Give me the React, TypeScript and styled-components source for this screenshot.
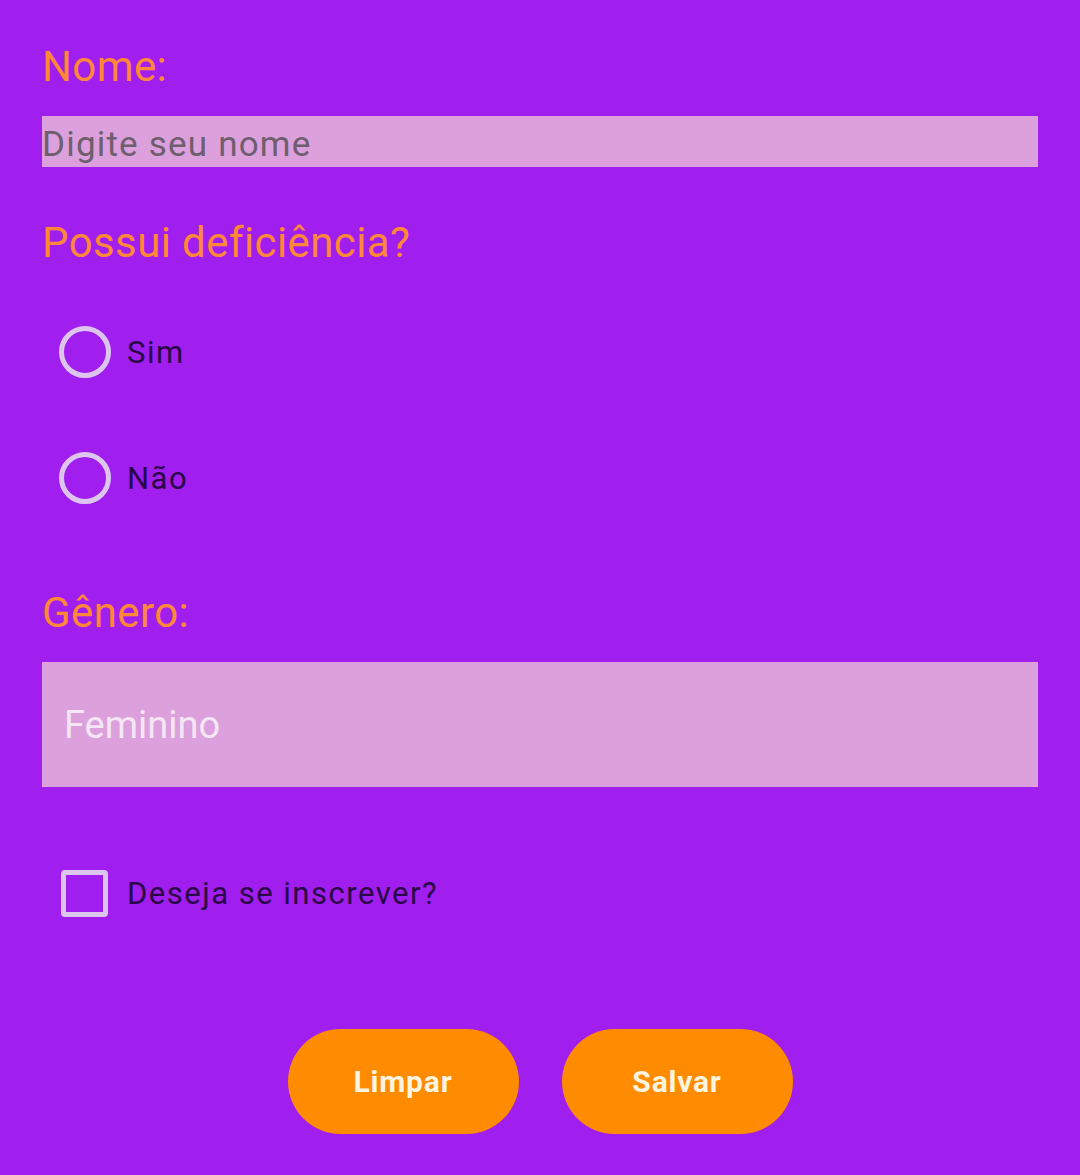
import React from "react";
import styled, { createGlobalStyle } from "styled-components";

const GlobalStyle = createGlobalStyle`
  html, body {
    margin: 0;
    padding: 0;
    background: #a01eee;
  }
  body {
    font-family: Roboto, "Noto Sans", sans-serif;
  }
`;

const Page = styled.div`
  width: 1080px;
  min-height: 1175px;
  box-sizing: border-box;
  padding: 42px 42px 0 42px;
  background: #a01eee;
  display: flex;
  flex-direction: column;
`;

const Label = styled.div<{ $top?: number }>`
  margin-top: ${(p) => p.$top ?? 0}px;
  font-size: 42px;
  line-height: 50px;
  letter-spacing: 0.4px;
  color: #ff8738;
`;

const TextInput = styled.input`
  margin-top: 24px;
  height: 51px;
  width: 100%;
  box-sizing: border-box;
  border: none;
  outline: none;
  padding: 5px 0 0 0;
  background: #dca0dc;
  font-family: Roboto, sans-serif;
  font-size: 35px;
  letter-spacing: 1.2px;
  color: #333;

  &::placeholder {
    color: #6e5e6e;
  }
`;

const OptionRow = styled.label<{ $top?: number }>`
  margin-top: ${(p) => p.$top ?? 0}px;
  height: 100px;
  display: flex;
  align-items: center;
  cursor: pointer;
`;

const IconSlot = styled.span`
  width: 85px;
  display: flex;
  align-items: center;
  justify-content: center;
`;

const RadioCircle = styled.span`
  width: 52px;
  height: 52px;
  box-sizing: border-box;
  border: 5px solid #dcc6f0;
  border-radius: 50%;
`;

const CheckSquare = styled.span`
  width: 47px;
  height: 47px;
  box-sizing: border-box;
  border: 5px solid #dcc6f0;
  border-radius: 4px;
`;

const OptionText = styled.span`
  font-size: 31px;
  letter-spacing: 1.5px;
  color: #2a0848;
`;

const Spinner = styled.div`
  margin-top: 24px;
  height: 125px;
  background: #dca0dc;
  display: flex;
  align-items: center;
  padding-left: 22px;
  font-size: 38px;
  color: #f4e6f4;
`;

const ButtonBar = styled.div`
  margin-top: 86px;
  display: flex;
  justify-content: center;
  gap: 43px;
`;

const PillButton = styled.button`
  width: 231px;
  height: 105px;
  border: none;
  border-radius: 53px;
  background: #ff8c00;
  color: #fff4e0;
  font-family: Roboto, sans-serif;
  font-size: 30px;
  font-weight: 700;
  letter-spacing: 0.8px;
  cursor: pointer;
`;

export default function App() {
  return (
    <>
      <GlobalStyle />
      <Page>
        <Label>Nome:</Label>
        <TextInput placeholder="Digite seu nome" />

        <Label $top={51}>Possui deficiência?</Label>
        <OptionRow $top={34}>
          <IconSlot>
            <RadioCircle />
          </IconSlot>
          <OptionText>Sim</OptionText>
        </OptionRow>
        <OptionRow $top={26}>
          <IconSlot>
            <RadioCircle />
          </IconSlot>
          <OptionText>Não</OptionText>
        </OptionRow>

        <Label $top={60}>Gênero:</Label>
        <Spinner>Feminino</Spinner>

        <OptionRow $top={56}>
          <IconSlot>
            <CheckSquare />
          </IconSlot>
          <OptionText>Deseja se inscrever?</OptionText>
        </OptionRow>

        <ButtonBar>
          <PillButton>Limpar</PillButton>
          <PillButton>Salvar</PillButton>
        </ButtonBar>
      </Page>
    </>
  );
}
